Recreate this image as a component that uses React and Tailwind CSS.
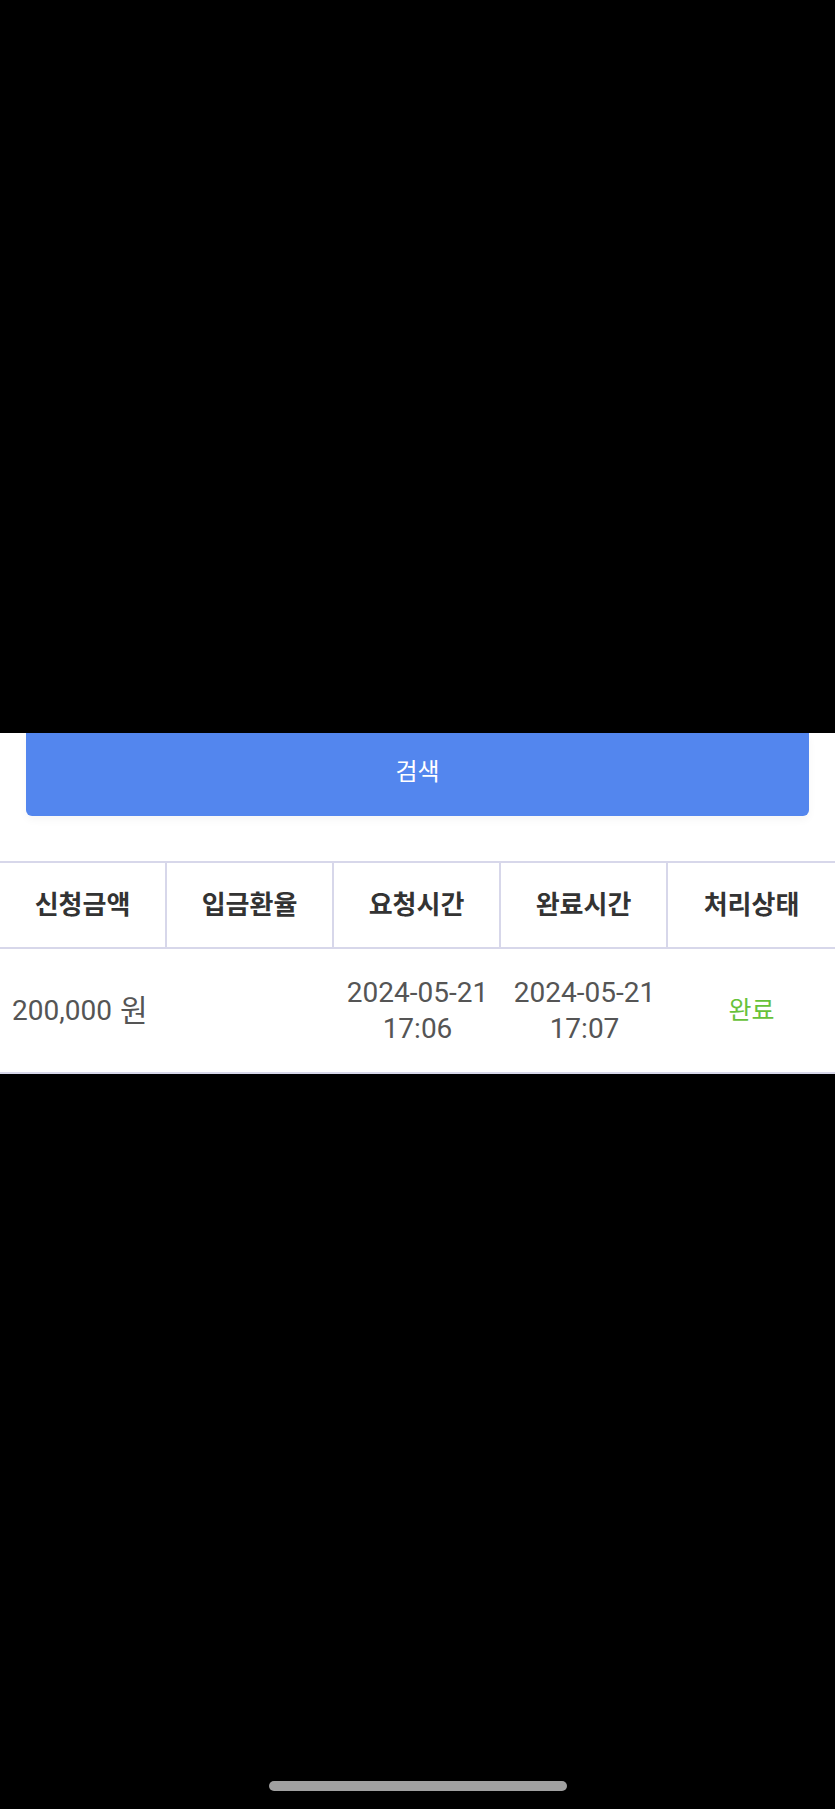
import React from 'react';

const columns = ['신청금액', '입금환율', '요청시간', '완료시간', '처리상태'];

const rows = [
  {
    id: 1,
    amount: '200,000 원',
    rate: '',
    requested: ['2024-05-21', '17:06'],
    completed: ['2024-05-21', '17:07'],
    status: '완료',
  },
];

const App = () => {
  return (
    <div className="w-[835px] h-[1809px] bg-black flex flex-col font-['Roboto','Noto_Sans_CJK_KR',sans-serif]">
      {/* Dimmed area above */}
      <div className="h-[733px] shrink-0 bg-black" />

      {/* Visible part of the page */}
      <div className="bg-white">
        {/* Search button */}
        <div className="px-[26px]">
          <button className="w-full h-[83px] bg-[#5386ee] rounded-b-md text-white text-[24px] flex items-center justify-center pb-[6px] shadow-[0_4px_8px_rgba(0,0,0,0.04)]">
            검색
          </button>
        </div>

        {/* Result table */}
        <div className="mt-[45px]">
          <div className="grid grid-cols-5 border-y-2 border-[#d7d7ea]">
            {columns.map((col, i) => (
              <div
                key={col}
                className={`h-[84px] flex items-center justify-center text-[26px] font-bold text-[#333333] ${
                  i < columns.length - 1 ? 'border-r-2 border-[#d7d7ea]' : ''
                }`}
              >
                {col}
              </div>
            ))}
          </div>

          {rows.map((row) => (
            <div
              key={row.id}
              className="grid grid-cols-5 border-b-2 border-[#d7d7ea] h-[125px] text-[28px] text-[#555555] leading-[36px]"
            >
              <div className="flex items-center pl-[12px] gap-[8px]">
                <span>200,000</span>
                <span className="text-[30px]">원</span>
              </div>
              <div className="flex items-center justify-center">{row.rate}</div>
              <div className="flex flex-col items-center justify-center">
                <span>{row.requested[0]}</span>
                <span>{row.requested[1]}</span>
              </div>
              <div className="flex flex-col items-center justify-center">
                <span>{row.completed[0]}</span>
                <span>{row.completed[1]}</span>
              </div>
              <div className="flex items-center justify-center text-[25px] text-[#67c23a]">
                {row.status}
              </div>
            </div>
          ))}
        </div>
      </div>

      {/* Home indicator */}
      <div className="flex-1 flex items-end justify-center pb-[18px]">
        <div className="w-[298px] h-[10px] rounded-full bg-[#a0a0a0]" />
      </div>
    </div>
  );
};

export default App;
